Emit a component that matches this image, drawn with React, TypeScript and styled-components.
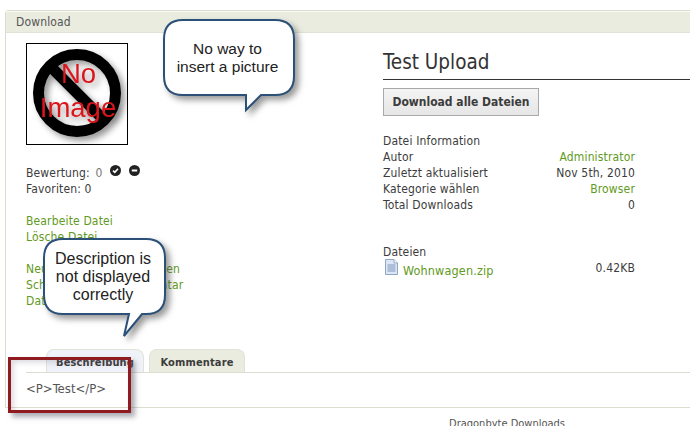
import { FC, ReactNode } from 'react';
import styled, { createGlobalStyle } from 'styled-components';

const GlobalStyle = createGlobalStyle`
  html, body {
    margin: 0;
    padding: 0;
    background: #fff;
  }
  body {
    width: 690px;
    height: 426px;
    overflow: hidden;
    font-family: "DejaVu Sans", "Liberation Sans", sans-serif;
    font-stretch: condensed;
    font-size: 12px;
    letter-spacing: 0.15px;
    line-height: 16px;
    color: #3c3c3c;
  }
`;

const Page = styled.div`
  position: relative;
  width: 690px;
  height: 426px;
  overflow: hidden;
  padding: 10px 0 0 5px;
  box-sizing: border-box;
`;

const Panel = styled.section`
  width: 700px;
  height: 398px;
  box-sizing: border-box;
  border: 1px solid #dcdccf;
  border-radius: 3px 0 0 0;
  display: flex;
  flex-direction: column;
`;

const PanelHeader = styled.header`
  height: 22px;
  flex: none;
  padding-left: 10px;
  background: #e9ecdf;
  border-top: 1px solid #fafaf5;
  border-bottom: 1px solid #dfe2d4;
  box-sizing: border-box;
  color: #555;
  line-height: 20px;
`;

const Columns = styled.div`
  display: flex;
  height: 316px;
  flex: none;
`;

const LeftColumn = styled.div`
  width: 377px;
  flex: none;
  padding: 10px 0 0 20px;
  box-sizing: border-box;
`;

const RightColumn = styled.div`
  flex: 1;
  padding-top: 16px;
`;

const Thumb = styled.div`
  width: 102px;
  height: 102px;
  box-sizing: border-box;
  border: 1px solid #000;
  background: #fff;
  margin-bottom: 20px;
`;

const RatingRow = styled.div`
  display: flex;
  align-items: flex-start;
`;

const RatingIcon = styled.svg`
  width: 11px;
  height: 11px;
  margin: 0 0 0 8px;
`;

const Muted = styled.span`
  margin-left: 2px;
  color: #777;
`;

const LinkGroup = styled.div`
  margin-top: 16px;
`;

const GreenLink = styled.a`
  display: block;
  color: #5f9a22;
  text-decoration: none;
  white-space: nowrap;
`;

const Title = styled.h1`
  margin: 0;
  width: 320px;
  height: 30px;
  border-bottom: 1px solid #333;
  font-weight: normal;
  font-size: 20.5px;
  letter-spacing: 0;
  line-height: 26px;
  color: #333;
`;

const DownloadButton = styled.button`
  display: block;
  margin-top: 8px;
  width: 156px;
  height: 28px;
  padding: 0;
  border: 1px solid #a9a9a9;
  background: linear-gradient(#f4f4f4, #e6e6e6);
  font-family: inherit;
  font-stretch: inherit;
  font-size: 12px;
  font-weight: bold;
  color: #3c3c3c;
`;

const InfoTable = styled.div`
  width: 252px;
  margin-top: 17px;
`;

const InfoRow = styled.div`
  display: flex;
  justify-content: space-between;
  white-space: nowrap;
`;

const InfoValue = styled.span<{ $link?: boolean }>`
  color: ${(p) => (p.$link ? '#5f9a22' : '#3c3c3c')};
`;

const FilesBlock = styled.div`
  width: 252px;
  margin-top: 31px;
`;

const FileRow = styled.div`
  display: flex;
  align-items: flex-start;
  justify-content: space-between;
`;

const FileName = styled.a`
  display: flex;
  align-items: flex-start;
  gap: 5px;
  padding-left: 2px;
  color: #5f9a22;
  font-size: 12.5px;
  text-decoration: none;
`;

const FileIconBox = styled.svg`
  margin-top: -1px;
`;

const FileLabel = styled.span`
  padding-top: 3px;
`;

const Tabs = styled.nav`
  display: flex;
  gap: 5px;
  height: 24px;
  flex: none;
  margin-left: 20px;
  padding-left: 20px;
  border-bottom: 1px solid #dcdccf;
  box-sizing: border-box;
`;

const Tab = styled.div<{ $active?: boolean }>`
  width: ${(p) => (p.$active ? '98px' : '96px')};
  height: 23px;
  box-sizing: border-box;
  border: 1px solid #e2e3d8;
  border-bottom: none;
  border-radius: 8px 8px 0 0;
  background: ${(p) => (p.$active ? '#f0f2f9' : '#e9ecdf')};
  text-align: center;
  font-size: 11px;
  font-weight: bold;
  line-height: 26px;
  color: #3c3c3c;
`;

const TabBody = styled.div`
  padding: 8px 0 0 20px;
  font-size: 13px;
  letter-spacing: 0;
  color: #555;
`;

const Footer = styled.footer`
  width: 690px;
  margin-top: 8px;
  padding-left: 314px;
  box-sizing: border-box;
  text-align: center;
  font-size: 11px;
  letter-spacing: 0;
  color: #555;
`;

const Bubble = styled.div<{ $left: number; $top: number; $width: number; $height: number; $size: number }>`
  position: absolute;
  left: ${(p) => p.$left}px;
  top: ${(p) => p.$top}px;
  width: ${(p) => p.$width}px;
  height: ${(p) => p.$height}px;
  padding-right: 3px;
  box-sizing: border-box;
  display: flex;
  align-items: center;
  justify-content: center;
  text-align: center;
  font-family: "Liberation Sans", Arial, sans-serif;
  font-stretch: normal;
  font-size: ${(p) => p.$size}px;
  letter-spacing: 0;
  line-height: 18px;
  color: #222;
`;

const BubbleShape = styled.svg`
  position: absolute;
  left: 0;
  top: 0;
  overflow: visible;
  filter: drop-shadow(4px 4px 3px rgba(70, 70, 70, 0.55));
`;

const BubbleText = styled.span`
  position: relative;
`;

const Highlight = styled.div`
  position: absolute;
  left: 8px;
  top: 357px;
  width: 123px;
  height: 56px;
  box-sizing: border-box;
  border: 3px solid #8f1a1f;
  box-shadow: 4px 4px 5px rgba(90, 90, 110, 0.5), inset 3px 3px 5px rgba(90, 90, 110, 0.2);
`;

type CalloutProps = {
  left: number;
  top: number;
  width: number;
  height: number;
  size: number;
  tail: string;
  children: ReactNode;
};

const Callout: FC<CalloutProps> = ({ left, top, width, height, size, tail, children }) => {
  const r = 19;
  const d = `M${r} 0H${width - r}Q${width} 0 ${width} ${r}V${height - r}Q${width} ${height} ${width - r} ${height}${tail}H${r}Q0 ${height} 0 ${height - r}V${r}Q0 0 ${r} 0Z`;
  return (
    <Bubble $left={left} $top={top} $width={width} $height={height} $size={size}>
      <BubbleShape width={width} height={height} viewBox={`0 0 ${width} ${height}`}>
        <path d={d} fill="#fff" stroke="#2c5178" strokeWidth="2" />
      </BubbleShape>
      <BubbleText>{children}</BubbleText>
    </Bubble>
  );
};

const NoImage: FC = () => (
  <svg width="100" height="100" viewBox="0 0 100 100">
    <defs>
      <filter id="soft" x="-20%" y="-20%" width="150%" height="150%">
        <feDropShadow dx="4" dy="4" stdDeviation="3" floodColor="#000" floodOpacity="0.4" />
      </filter>
    </defs>
    <g filter="url(#soft)">
      <circle cx="50" cy="49" r="38.5" fill="none" stroke="#000" strokeWidth="11" />
      <path d="M23 22L77 76" stroke="#000" strokeWidth="11" />
    </g>
    <g
      filter="url(#soft)"
      fill="#d9161c"
      fontFamily="'Liberation Sans', Arial, sans-serif"
      fontSize="27.5"
      textAnchor="middle"
      letterSpacing="0"
    >
      <text x="51.5" y="39">No</text>
      <text x="51" y="73">Image</text>
    </g>
  </svg>
);

const FileIcon: FC = () => (
  <FileIconBox width="13" height="16" viewBox="0 0 13 16">
    <path d="M.5.5H9L12.5 4V15.5H.5Z" fill="#dce6f4" stroke="#8fa6c4" />
    <path d="M9 .5V4H12.5" fill="#fff" stroke="#8fa6c4" />
    <path d="M2.5 6H10.5M2.5 8H10.5M2.5 10H10.5M2.5 12H10.5" stroke="#7f97b8" />
  </FileIconBox>
);

export default function App() {
  return (
    <>
      <GlobalStyle />
      <Page>
        <Panel>
          <PanelHeader>Download</PanelHeader>
          <Columns>
            <LeftColumn>
              <Thumb>
                <NoImage />
              </Thumb>
              <RatingRow>
                Bewertung:&nbsp;<Muted>0</Muted>
                <RatingIcon viewBox="0 0 11 11">
                  <circle cx="5.5" cy="5.5" r="5.5" fill="#222" />
                  <path d="M3 5.6L4.8 7.4L8 3.8" fill="none" stroke="#fff" strokeWidth="1.6" />
                </RatingIcon>
                <RatingIcon viewBox="0 0 11 11">
                  <circle cx="5.5" cy="5.5" r="5.5" fill="#222" />
                  <path d="M2.8 5.5H8.2" stroke="#fff" strokeWidth="2" />
                </RatingIcon>
              </RatingRow>
              <div>Favoriten: 0</div>
              <LinkGroup>
                <GreenLink>Bearbeite Datei</GreenLink>
                <GreenLink>Lösche Datei</GreenLink>
              </LinkGroup>
              <LinkGroup>
                <GreenLink>Neue Screenshots anzeigen</GreenLink>
                <GreenLink>Schreibe deinen Kommentar</GreenLink>
                <GreenLink>Datei melden</GreenLink>
              </LinkGroup>
            </LeftColumn>
            <RightColumn>
              <Title>Test Upload</Title>
              <DownloadButton>Download alle Dateien</DownloadButton>
              <InfoTable>
                <div>Datei Information</div>
                <InfoRow>
                  <span>Autor</span>
                  <InfoValue $link>Administrator</InfoValue>
                </InfoRow>
                <InfoRow>
                  <span>Zuletzt aktualisiert</span>
                  <InfoValue>Nov 5th, 2010</InfoValue>
                </InfoRow>
                <InfoRow>
                  <span>Kategorie wählen</span>
                  <InfoValue $link>Browser</InfoValue>
                </InfoRow>
                <InfoRow>
                  <span>Total Downloads</span>
                  <InfoValue>0</InfoValue>
                </InfoRow>
              </InfoTable>
              <FilesBlock>
                <div>Dateien</div>
                <FileRow>
                  <FileName>
                    <FileIcon />
                    <FileLabel>Wohnwagen.zip</FileLabel>
                  </FileName>
                  <span>0.42KB</span>
                </FileRow>
              </FilesBlock>
            </RightColumn>
          </Columns>
          <Tabs>
            <Tab $active>Beschreibung</Tab>
            <Tab>Kommentare</Tab>
          </Tabs>
          <TabBody>&lt;P&gt;Test&lt;/P&gt;</TabBody>
        </Panel>
        <Footer>Dragonbyte Downloads</Footer>
        <Callout left={164} top={20} width={130} height={75} size={15.5} tail="H97L82 90V75H19">
          No way to
          <br />
          insert a picture
        </Callout>
        <Callout left={44} top={239} width={121} height={75} size={16} tail="H98L80 97L85 75H19">
          Description is
          <br />
          not displayed
          <br />
          correctly
        </Callout>
        <Highlight />
      </Page>
    </>
  );
}
